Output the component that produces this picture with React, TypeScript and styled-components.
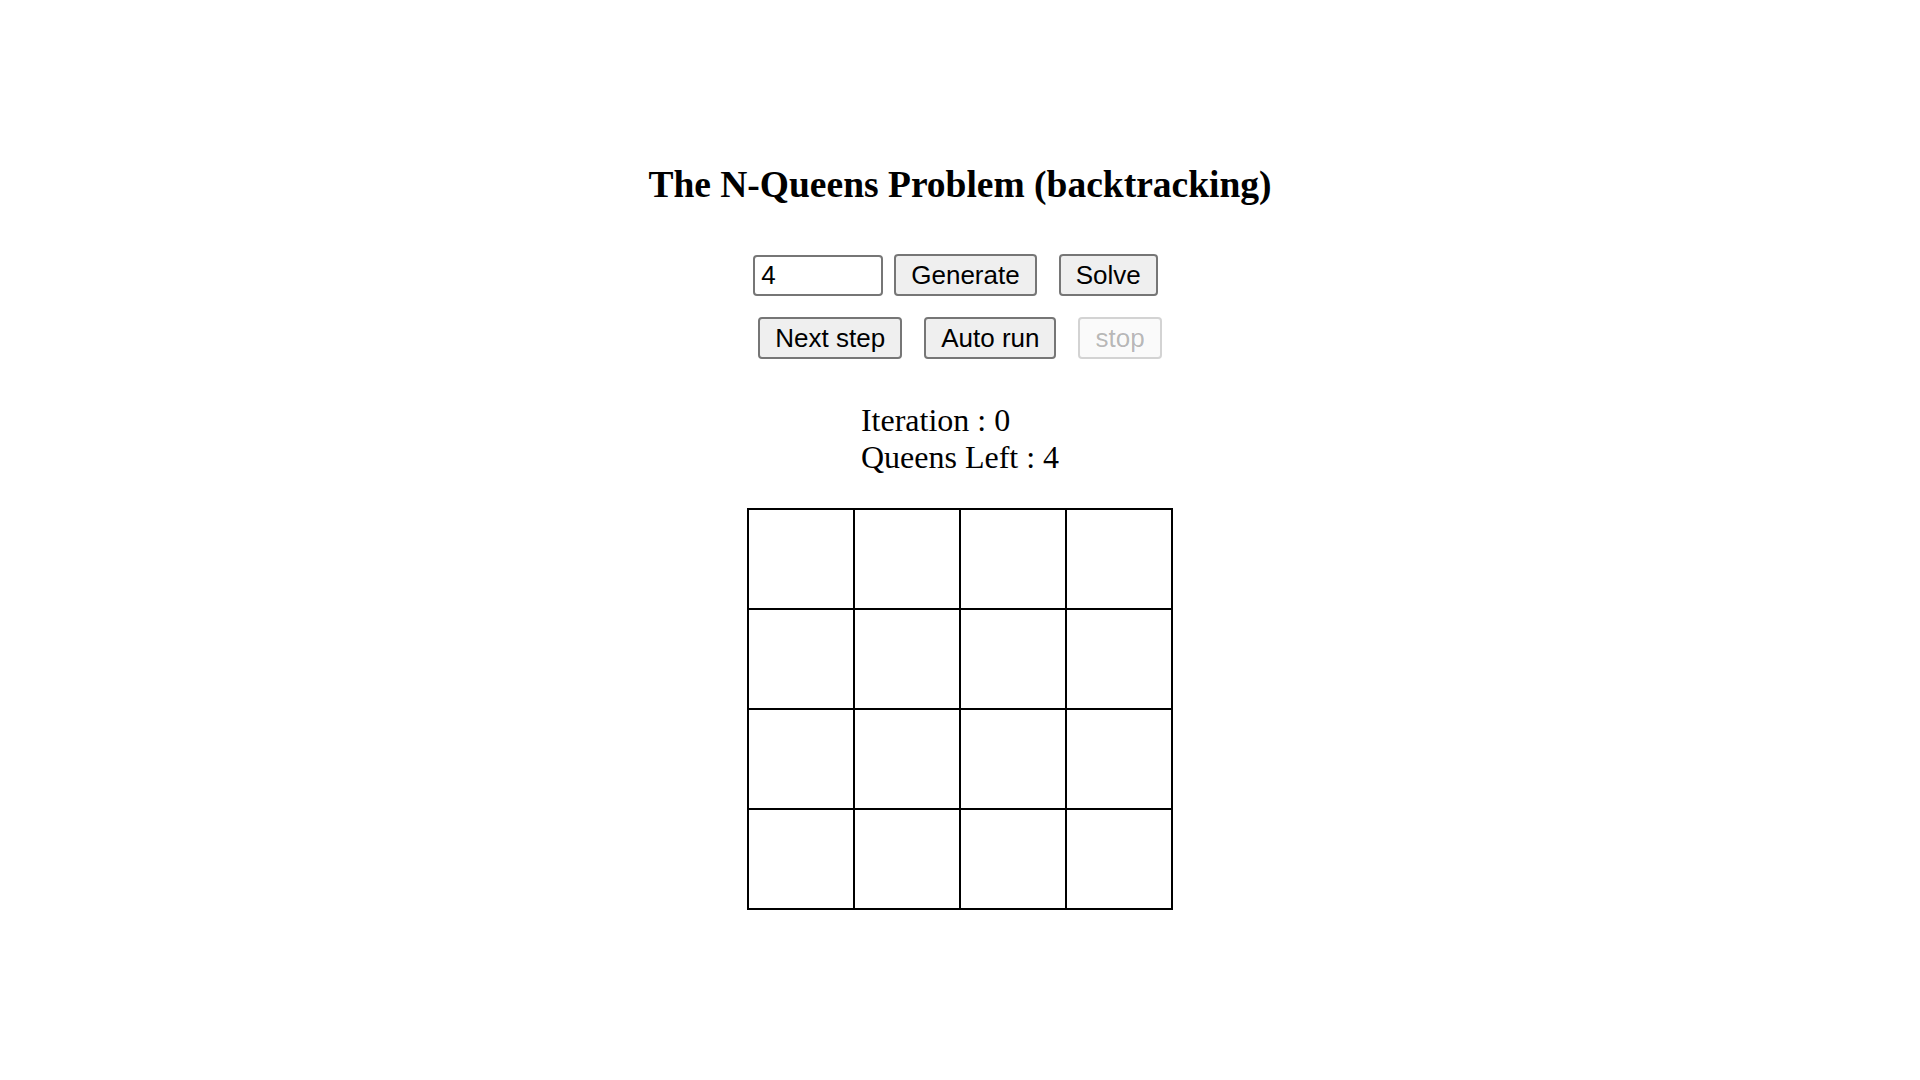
import React from "react";
import styled, { createGlobalStyle } from "styled-components";

const GlobalStyle = createGlobalStyle`
  html, body {
    margin: 0;
    padding: 0;
    background: #ffffff;
  }
  body {
    font-family: "Liberation Serif", "Times New Roman", serif;
    color: #000000;
  }
`;

const Page = styled.main`
  display: flex;
  flex-direction: column;
  align-items: center;
  padding-top: 164px;
  min-height: 1080px;
  box-sizing: border-box;
`;

const Title = styled.h1`
  margin: 0;
  font-family: "Liberation Serif", "Times New Roman", serif;
  font-weight: bold;
  font-size: 37.5px;
  line-height: 42px;
  text-align: center;
`;

const Controls = styled.div`
  display: flex;
  flex-direction: column;
  align-items: center;
  gap: 21px;
  margin-top: 48px;
`;

const Row = styled.div<{ $offset?: number }>`
  display: flex;
  align-items: center;
  justify-content: center;
  gap: 22px;
  padding-right: ${(p) => p.$offset ?? 0}px;
`;

const Group = styled.div`
  display: flex;
  align-items: center;
  gap: 11px;
`;

const SizeInput = styled.input`
  box-sizing: border-box;
  width: 130px;
  height: 41px;
  padding: 0 6px;
  border: 2px solid #767676;
  border-radius: 4px;
  font-family: "Liberation Sans", Arial, sans-serif;
  font-size: 26px;
  color: #000;
  background: #fff;
  outline: none;
`;

const Button = styled.button`
  box-sizing: border-box;
  height: 42px;
  padding: 0 15px;
  border: 2px solid #767676;
  border-radius: 4px;
  background: #efefef;
  color: #000;
  font-family: "Liberation Sans", Arial, sans-serif;
  font-size: 26px;
  line-height: 1;
  cursor: pointer;

  &:disabled {
    border-color: rgba(118, 118, 118, 0.3);
    background: rgba(239, 239, 239, 0.3);
    color: rgba(16, 16, 16, 0.3);
    cursor: default;
  }
`;

const Info = styled.div`
  margin-top: 43px;
  font-family: "Liberation Serif", "Times New Roman", serif;
  font-size: 32px;
  line-height: 37px;
  text-align: left;
`;

const Board = styled.div<{ $n: number }>`
  margin-top: 32px;
  display: grid;
  grid-template-columns: repeat(${(p) => p.$n}, 106px);
  grid-auto-rows: 100px;
  border-top: 2px solid #000;
  border-left: 2px solid #000;
`;

const Cell = styled.div`
  box-sizing: border-box;
  border-right: 2px solid #000;
  border-bottom: 2px solid #000;
  background: #fff;
`;

export default function App() {
  const n = 4;
  const cells = Array.from({ length: n * n }, (_, i) => i);
  return (
    <>
      <GlobalStyle />
      <Page>
        <Title>The N-Queens Problem (backtracking)</Title>
        <Controls>
          <Row $offset={9}>
            <Group>
              <SizeInput type="text" defaultValue="4" />
              <Button>Generate</Button>
            </Group>
            <Button>Solve</Button>
          </Row>
          <Row>
            <Button>Next step</Button>
            <Button>Auto run</Button>
            <Button disabled>stop</Button>
          </Row>
        </Controls>
        <Info>
          <div>Iteration : 0</div>
          <div>Queens Left : 4</div>
        </Info>
        <Board $n={n}>
          {cells.map((i) => (
            <Cell key={i} />
          ))}
        </Board>
      </Page>
    </>
  );
}
